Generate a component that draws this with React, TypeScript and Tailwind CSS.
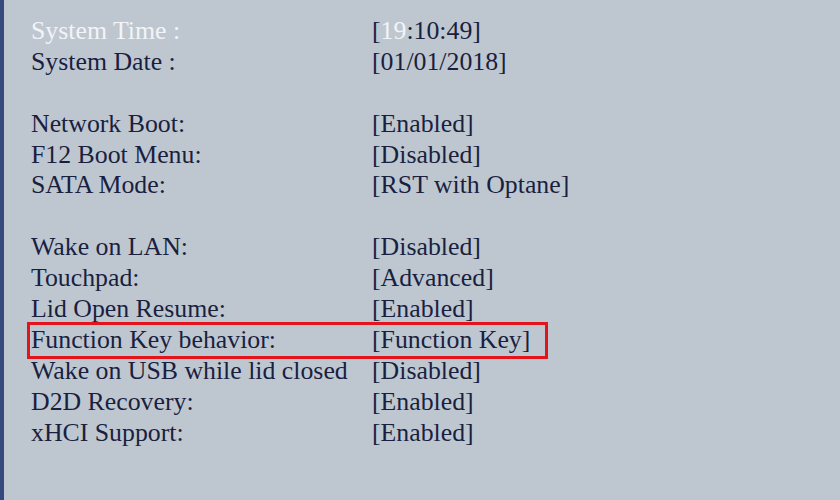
import React from "react";

const rows: ([string, React.ReactNode] | null)[] = [
  ["System Time :", null],
  ["System Date :", "[01/01/2018]"],
  null,
  ["Network Boot:", "[Enabled]"],
  ["F12 Boot Menu:", "[Disabled]"],
  ["SATA Mode:", "[RST with Optane]"],
  null,
  ["Wake on LAN:", "[Disabled]"],
  ["Touchpad:", "[Advanced]"],
  ["Lid Open Resume:", "[Enabled]"],
  ["Function Key behavior:", "[Function Key]"],
  ["Wake on USB while lid closed", "[Disabled]"],
  ["D2D Recovery:", "[Enabled]"],
  ["xHCI Support:", "[Enabled]"],
];

export default function App() {
  return (
    <div
      className="w-[840px] h-[500px] overflow-hidden bg-[#bec7d0] border-l-[4px] border-[#34497e] text-[#1a1f40] text-[25.8px] leading-[30.9px]"
      style={{ fontFamily: '"Liberation Serif", "Times New Roman", serif' }}
    >
      <div className="pl-[27px] pt-[16px] flex flex-col">
        {rows.map((r, i) =>
          r === null ? (
            <div key={i} className="h-[30.9px]" />
          ) : (
            <div key={i} className="relative flex h-[30.9px] whitespace-nowrap">
              <div className={`w-[341px] ${i === 0 ? "text-[#f2f4f7]" : ""}`}>{r[0]}</div>
              <div>
                {i === 0 ? (
                  <span>
                    [<span className="text-[#f2f4f7]">19</span>:10:49]
                  </span>
                ) : (
                  r[1]
                )}
              </div>
              {i === 10 && (
                <div className="absolute left-[-4px] top-[-3px] w-[521px] h-[37px] border-[3px] border-[#e2151c]" />
              )}
            </div>
          )
        )}
      </div>
    </div>
  );
}
